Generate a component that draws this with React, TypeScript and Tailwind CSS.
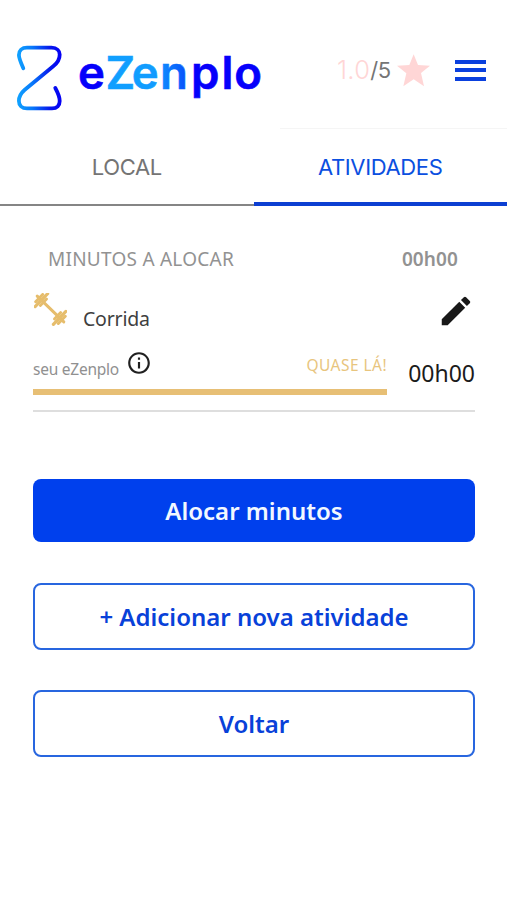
import { useState } from 'react';
import { MdEdit, MdInfoOutline } from 'react-icons/md';

type Tab = 'local' | 'atividades';

function Logo() {
  return (
    <svg width="252" height="76" viewBox="14 40 252 76" aria-label="eZenplo">
      <defs>
        <linearGradient id="mark" gradientUnits="userSpaceOnUse" x1="17" y1="0" x2="61" y2="0">
          <stop offset="0" stopColor="#10a4ff" />
          <stop offset="0.35" stopColor="#0878fa" />
          <stop offset="0.75" stopColor="#0618ec" />
          <stop offset="1" stopColor="#0500f5" />
        </linearGradient>
        <linearGradient id="word" gradientUnits="userSpaceOnUse" x1="79" y1="0" x2="262" y2="0">
          <stop offset="0.15" stopColor="#0500fb" />
          <stop offset="0.15" stopColor="#10a0ff" />
          <stop offset="0.41" stopColor="#129cff" />
          <stop offset="0.61" stopColor="#0648fb" />
          <stop offset="0.615" stopColor="#0500fb" />
        </linearGradient>
      </defs>
      <path
        d="M23.3 68.2 C20.5 62 18.9 58 18.9 55 C18.9 50.5 22 47.7 27 47.7 H51.5 C57 47.7 59.7 51 59.7 54.5 C59.7 59 58 62.5 53.5 66 L24.5 90 C20.5 93.5 18.9 97.5 18.9 101 C18.9 105.5 22 108.4 27 108.4 H52 C57 108.4 59.7 105.5 59.7 101 C59.7 97.5 58 93 55.3 88"
        fill="none"
        stroke="url(#mark)"
        strokeWidth="3.8"
        strokeLinecap="round"
      />
      <text
        x="78 105.6 131.8 160.1 191 221.5 234.2"
        y="88.6"
        fill="url(#word)"
        stroke="url(#word)"
        strokeWidth="0.6"
        className="font-['Inter'] text-[45.5px] font-semibold"
      >
        eZenplo
      </text>
    </svg>
  );
}

function Star() {
  return (
    <svg width="33" height="33" viewBox="0 0 99 97" fill="#ffd6d6">
      <path d="M50 0 L63 32 L99 34 L72 56 L81 96 L50 75 L19 96 L28 57 L0 34 L37 32 Z" />
    </svg>
  );
}

// Drawn flat, then turned so the bar runs from top left to bottom right
function Dumbbell() {
  return (
    <svg width="33" height="33" viewBox="0 0 33 33" fill="none" stroke="#e6bd6c" strokeLinecap="round">
      <g transform="translate(16.5 16) rotate(44)">
        <path d="M-18.5 0 H18.5" strokeWidth="3" />
        <path d="M-15.7 -5 V5 M15.7 -5 V5" strokeWidth="3" />
        <path d="M-12.7 -9 V9 M12.7 -9 V9" strokeWidth="3.2" />
        <path d="M-9.8 -4.5 V4.5 M9.8 -4.5 V4.5" strokeWidth="2.8" />
      </g>
    </svg>
  );
}

export default function App() {
  const [activeTab, setActiveTab] = useState<Tab>('atividades');

  const tabClass = (tab: Tab) =>
    activeTab === tab
      ? 'border-b-4 border-[#0c3fd2] pt-1 text-[#0b4fe0]'
      : 'border-b-2 border-[#858585] pt-0.5 text-[#747474]';

  return (
    <div className="h-[900px] w-[507px] overflow-hidden bg-white font-['Noto_Sans',sans-serif]">
      <header className="flex h-[129px] items-start pl-3.5 pt-10">
        <Logo />
        <div className="ml-[71px] mt-3.5 flex h-8 w-[93px] items-center font-['Inter']">
          <span className="text-[25.5px] font-light leading-8 tracking-[0.3px] text-[#ffd6d6]">1.0</span>
          <span className="text-[22px] leading-8 tracking-[-0.5px] text-[#757575]">/5</span>
          <span className="ml-auto shrink-0">
            <Star />
          </span>
        </div>
        <button className="ml-[25px] mt-[19.5px] flex w-[31px] flex-col gap-[4.5px]" aria-label="Menu">
          <span className="h-1 w-full bg-[#0a40de]" />
          <span className="h-1 w-full bg-[#0a40de]" />
          <span className="h-1 w-full bg-[#0a40de]" />
        </button>
      </header>
      <div className="-mt-px ml-[280px] h-px bg-[#f5f5f5]" />

      <nav className="grid h-[77px] grid-cols-2 font-['Inter'] text-[22px]">
        <button onClick={() => setActiveTab('local')} className={tabClass('local')}>
          <span className="tracking-[-0.4px]">LOCAL</span>
        </button>
        <button onClick={() => setActiveTab('atividades')} className={tabClass('atividades')}>
          <span className="tracking-[-0.35px]">ATIVIDADES</span>
        </button>
      </nav>

      <main className="px-8">
        <div className="flex h-[86px] items-end justify-between pb-5 pl-4 pr-[17px] text-[19px] leading-[26px] text-[#929292]">
          <span className="tracking-[0.25px]">MINUTOS A ALOCAR</span>
          <span className="font-semibold tracking-[0.1px]">00h00</span>
        </div>

        <div className="flex h-[44px] items-start justify-between">
          <div className="flex">
            <span className="mt-px pl-0.5">
              <Dumbbell />
            </span>
            <span className="ml-4 mt-[13px] text-[19.5px] leading-7 tracking-[-0.2px] text-[#3f3f3f]">Corrida</span>
          </div>
          <MdEdit className="size-[38px] text-[#181818]" />
        </div>

        <div className="ml-px flex h-[76px] border-b-2 border-[#dedede]">
          <div className="w-[354px]">
            <div className="flex h-[53px] justify-between text-[#909090]">
              <div className="flex">
                <span className="mt-[21px] w-[86px] whitespace-nowrap text-[15.5px] leading-6 tracking-[-0.25px]">
                  seu eZenplo
                </span>
                <MdInfoOutline className="ml-[7px] mt-[14px] size-[26px] text-[#202020]" />
              </div>
              <span className="mt-[17px] text-[15.5px] leading-6 tracking-[0.45px] text-[#e8c57e]">QUASE LÁ!</span>
            </div>
            <div className="h-[6px] bg-[#e7bf75]" />
          </div>
          <span className="ml-auto mt-[21px] text-[23px] leading-8 text-[#1b1b1b]">00h00</span>
        </div>

        <div className="ml-px mt-[67px] flex flex-col text-[24px] font-semibold">
          <button className="h-[63px] rounded-lg bg-[#0040ed] text-[#f2f8ff]">Alocar minutos</button>
          <button className="mt-[41px] h-[67px] rounded-lg border-2 border-[#2866df] text-[#0841d9]">
            + Adicionar nova atividade
          </button>
          <button className="mt-[40px] h-[67px] rounded-lg border-2 border-[#2866df] text-[#0841d9]">Voltar</button>
        </div>
      </main>
    </div>
  );
}
